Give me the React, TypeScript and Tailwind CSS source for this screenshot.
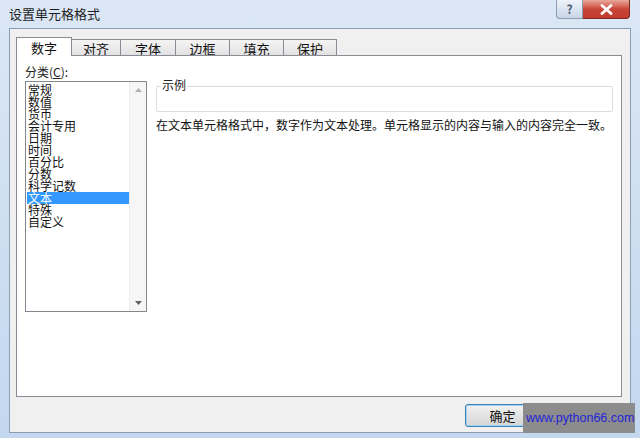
const FONT = { fontFamily: '"Noto Sans CJK SC", "Microsoft YaHei", sans-serif' };

const tabs = ["数字", "对齐", "字体", "边框", "填充", "保护"];
const tabWidths = ["w-[56px]", "w-[49px]", "w-[55px]", "w-[54px]", "w-[54px]", "w-[53px]"];

const categories = [
  "常规",
  "数值",
  "货币",
  "会计专用",
  "日期",
  "时间",
  "百分比",
  "分数",
  "科学记数",
  "文本",
  "特殊",
  "自定义",
];

export default function App() {
  return (
    <div className="relative h-[442px] w-[640px] overflow-hidden bg-white" style={FONT}>
      <div className="flex h-[438px] w-[640px] flex-col bg-gradient-to-b from-[#dbe7f5] to-[#c3d7ee] px-[9px] pb-[5px]">
        {/* title bar */}
        <div className="flex h-[28px] shrink-0 items-start justify-between">
          <span className="pt-[6px] text-[13px] leading-[16px] text-[#1e1e1e]">设置单元格格式</span>
          <div className="mr-[1px] flex">
            <div className="flex h-[19px] w-[27px] items-center justify-center rounded-bl-[4px] border border-t-0 border-[#8a9bb2] bg-gradient-to-b from-[#eef3fa] to-[#c8d6e8] text-[12px] font-bold leading-none text-[#4a5a70]">
              ?
            </div>
            <div className="flex h-[19px] w-[47px] items-center justify-center rounded-br-[4px] border border-l-0 border-t-0 border-[#7a2b24] bg-gradient-to-b from-[#e9a89c] via-[#c8453a] to-[#c23b2d]">
              <svg width="13" height="11" viewBox="0 0 13 11">
                <path d="M2 1.5 L11 9.5 M11 1.5 L2 9.5" stroke="#ffffff" strokeWidth="2.8" strokeLinecap="round" />
              </svg>
            </div>
          </div>
        </div>

        {/* client area */}
        <div className="relative flex flex-1 flex-col border border-[#8d9db3] bg-[#f0f0f0]">
          <div className="flex pl-[6px] pt-[8px]">
            {tabs.map((t, i) =>
              i === 0 ? (
                <div
                  key={t}
                  className={`relative z-10 flex h-[19px] ${tabWidths[i]} items-center justify-center border border-b-0 border-[#898c95] bg-white text-[13px] leading-none text-[#111]`}
                >
                  {t}
                </div>
              ) : (
                <div
                  key={t}
                  className={`mt-[2px] flex h-[17px] ${tabWidths[i]} items-center justify-center border border-b-0 border-l-0 border-[#898c95] bg-gradient-to-b from-[#f4f4f4] to-[#e1e1e1] text-[13px] leading-none text-[#111]`}
                >
                  {t}
                </div>
              ),
            )}
          </div>

          {/* tab panel */}
          <div className="ml-[6px] mt-[-1px] flex h-[342px] w-[606px] border border-[#898c95] bg-white">
            <div className="flex flex-col pl-[8px] pt-[9px]">
              <span className="text-[12px] leading-[14px] text-[#222]">
                分类(<span className="underline">C</span>):
              </span>
              <div className="mt-[2px] flex h-[231px] w-[122px] border border-[#828790] bg-white">
                <div className="flex flex-1 flex-col pl-[1px] pt-[2px]">
                  {categories.map((c) =>
                    c === "文本" ? (
                      <div key={c} className="h-[12px] bg-[#3399ff] pl-[1px] text-[12px] leading-[12px] text-white">
                        {c}
                      </div>
                    ) : (
                      <div key={c} className="h-[12px] pl-[1px] text-[12px] leading-[12px] text-[#111]">
                        {c}
                      </div>
                    ),
                  )}
                </div>
                <div className="flex w-[17px] flex-col items-center justify-between border-l border-[#ececec] bg-[#f6f6f6] py-[6px]">
                  <svg width="7" height="4" viewBox="0 0 7 4">
                    <path d="M0 4 L3.5 0 L7 4 Z" fill="#b0b0b0" />
                  </svg>
                  <svg width="7" height="4" viewBox="0 0 7 4">
                    <path d="M0 0 L3.5 4 L7 0 Z" fill="#606060" />
                  </svg>
                </div>
              </div>
            </div>

            <div className="flex flex-1 flex-col pl-[9px] pr-[8px] pt-[30px]">
              <div className="relative h-[26px] rounded-[2px] border border-[#dcdcdc]">
                <span className="absolute left-[4px] top-[-9px] bg-white px-[1px] text-[12px] leading-[14px] text-[#222]">示例</span>
              </div>
              <p className="mt-[6px] text-[12px] leading-[14px] text-[#111]">
                在文本单元格格式中，数字作为文本处理。单元格显示的内容与输入的内容完全一致。
              </p>
            </div>
          </div>

          <div className="flex justify-end pr-[90px] pt-[7px]">
            <button className="flex h-[23px] w-[75px] items-center justify-center rounded-[3px] border border-[#3c7fb1] bg-gradient-to-b from-[#f2f2f2] to-[#d4d4d4] text-[13px] leading-none text-[#111] shadow-[inset_0_0_0_1px_#9fd6f5]">
              确定
            </button>
          </div>
        </div>
      </div>

      {/* watermark */}
      <div className="absolute left-[523px] top-[403px] flex h-[30px] w-[112px] items-center bg-[#8c8c8c] pl-[3px]">
        <span className="text-[12.5px] leading-none text-[#2424d8]" style={{ fontFamily: '"Liberation Sans", Arial, sans-serif' }}>
          www.python66.com
        </span>
      </div>
    </div>
  );
}
